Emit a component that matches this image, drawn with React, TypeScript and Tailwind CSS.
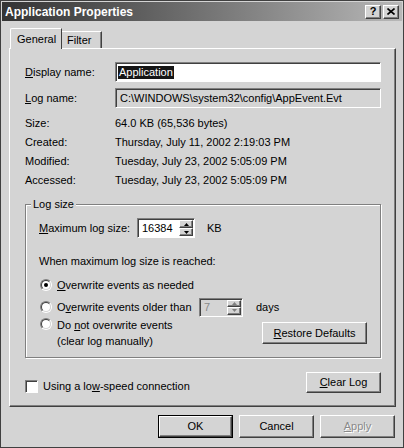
import React from 'react';

const raised =
  'border border-t-white border-l-white border-r-[#404040] border-b-[#404040] shadow-[inset_-1px_-1px_0_#808080]';
const sunken =
  'border border-t-[#808080] border-l-[#808080] border-r-white border-b-white shadow-[inset_1px_1px_0_#404040]';

function Btn({
  children,
  className = '',
  def = false,
}: {
  children: React.ReactNode;
  className?: string;
  def?: boolean;
}) {
  if (def) {
    return (
      <div className={`border border-black ${className}`}>
        <div className={`${raised} h-full w-full bg-[#d4d4d4] flex items-center justify-center`}>
          {children}
        </div>
      </div>
    );
  }
  return (
    <div className={`${raised} bg-[#d4d4d4] flex items-center justify-center ${className}`}>
      {children}
    </div>
  );
}

function Arrow({ up, disabled }: { up?: boolean; disabled?: boolean }) {
  return (
    <div className={`${raised} flex-1 bg-[#d4d4d4] flex items-center justify-center`}>
      <svg width="5" height="3" viewBox="0 0 5 3">
        <path
          d={up ? 'M2.5 0L5 3H0z' : 'M0 0h5L2.5 3z'}
          fill={disabled ? '#808080' : '#000'}
        />
      </svg>
    </div>
  );
}

function Spinner({
  value,
  className,
  disabled = false,
}: {
  value: string;
  className: string;
  disabled?: boolean;
}) {
  return (
    <div
      className={`${sunken} flex ${disabled ? 'bg-[#d4d4d4] text-[#8a8a8a]' : 'bg-white'} ${className}`}
    >
      <div className="flex-1 flex items-center pl-[4px]">{value}</div>
      <div className="w-[15px] flex flex-col py-px pr-px">
        <Arrow up disabled={disabled} />
        <Arrow disabled={disabled} />
      </div>
    </div>
  );
}

function Radio({ checked = false }: { checked?: boolean }) {
  return (
    <div className="w-[12px] h-[12px] rounded-full border border-t-[#808080] border-l-[#808080] border-r-white border-b-white shrink-0">
      <div className="w-full h-full rounded-full border border-t-[#404040] border-l-[#404040] border-r-[#d4d4d4] border-b-[#d4d4d4] bg-white flex items-center justify-center">
        {checked && <div className="w-[4px] h-[4px] rounded-full bg-black" />}
      </div>
    </div>
  );
}

export default function App() {
  return (
    <div className="font-['Liberation_Sans',Arial,sans-serif] text-[11px] leading-none text-black w-[404px] h-[448px] bg-[#d4d4d4] border border-[#404040] flex flex-col overflow-hidden">
      {/* title bar */}
      <div className="mx-px mt-px h-[19px] bg-linear-to-r from-[#343434] to-[#b8b8b8] flex items-center pl-[3px] pr-[3px]">
        <span className="text-white font-bold text-[12px]">Application Properties</span>
        <div className="ml-auto flex gap-[2px]">
          <Btn className="w-[16px] h-[14px]">
            <span className="font-bold text-[11px]">?</span>
          </Btn>
          <Btn className="w-[16px] h-[14px]">
            <svg width="8" height="7" viewBox="0 0 8 7">
              <path d="M0.5 0.5L7.5 6.5M7.5 0.5L0.5 6.5" stroke="#000" strokeWidth="1.6" />
            </svg>
          </Btn>
        </div>
      </div>

      {/* tabs */}
      <div className="flex items-end pl-[9px] mt-[6px] h-[21px]">
        <div className="h-[21px] w-[52px] -mb-px relative z-10 bg-[#d4d4d4] border-t border-l border-t-white border-l-white border-r border-r-[#404040] rounded-tl-[2px] flex items-start pt-[5px] pl-[6px]">
          General
        </div>
        <div className="h-[17px] w-[40px] bg-[#d4d4d4] border-t border-t-white border-r border-r-[#404040] shadow-[inset_-1px_0_0_#808080] flex items-start pt-[3px] pl-[5px]">
          Filter
        </div>
      </div>

      {/* panel */}
      <div className={`${raised} ml-[8px] w-[387px] h-[359px] pl-[15px] pr-[14px] flex flex-col`}>
        <div className="mt-[13px] h-[20px] flex items-center">
          <div className="w-[90px]">
            <u>D</u>isplay name:
          </div>
          <div className={`${sunken} flex-1 h-full bg-white flex items-center pl-[2px]`}>
            <span className="bg-[#161616] text-white px-px py-[1px]">Application</span>
          </div>
        </div>
        <div className="mt-[6px] h-[20px] flex items-center">
          <div className="w-[90px]">
            <u>L</u>og name:
          </div>
          <div className={`${sunken} flex-1 h-full flex items-center pl-[4px]`}>
            C:\WINDOWS\system32\config\AppEvent.Evt
          </div>
        </div>

        <div className="mt-[6px] flex flex-col">
          {[
            ['Size:', '64.0 KB (65,536 bytes)'],
            ['Created:', 'Thursday, July 11, 2002 2:19:03 PM'],
            ['Modified:', 'Tuesday, July 23, 2002 5:05:09 PM'],
            ['Accessed:', 'Tuesday, July 23, 2002 5:05:09 PM'],
          ].map(([k, v]) => (
            <div key={k} className="h-[19px] flex items-center">
              <div className="w-[90px]">{k}</div>
              <div>{v}</div>
            </div>
          ))}
        </div>

        {/* log size group */}
        <div className="mt-[14px] h-[154px] border border-[#808080] shadow-[1px_1px_0_#fff,inset_1px_1px_0_#fff] flex flex-col pl-[13px] pr-[13px]">
          <span className="-mt-[8px] -ml-[8px] self-start px-[2px] h-[14px] leading-[14px] bg-[#d4d4d4]">
            Log size
          </span>
          <div className="mt-[7px] h-[20px] flex items-center">
            <div className="w-[98px]">
              <u>M</u>aximum log size:
            </div>
            <Spinner value="16384" className="w-[58px] h-[20px]" />
            <div className="ml-[12px]">KB</div>
          </div>
          <div className="mt-[15px] h-[16px] flex items-center">When maximum log size is reached:</div>
          <div className="mt-[7px] h-[18px] flex items-center pl-px">
            <Radio checked />
            <div className="ml-[5px]">
              <u>O</u>verwrite events as needed
            </div>
          </div>
          <div className="mt-[3px] h-[20px] flex items-center pl-px">
            <Radio />
            <div className="ml-[5px] w-[142px]">
              O<u>v</u>erwrite events older than
            </div>
            <Spinner value="7" disabled className="w-[44px] h-[19px]" />
            <div className="ml-[13px]">days</div>
          </div>
          <div className="mt-px flex items-start pl-px">
            <Radio />
            <div className="ml-[5px] leading-[16px] -mt-[1px]">
              <div>
                Do <u>n</u>ot overwrite events
              </div>
              <div>(clear log manually)</div>
            </div>
            <Btn className="ml-auto mt-[4px] w-[105px] h-[22px]">
              <span>
                <u>R</u>estore Defaults
              </span>
            </Btn>
          </div>
        </div>

        <div className="mt-[14px] h-[21px] flex items-start">
          <div className={`${sunken} mt-[8px] w-[13px] h-[13px] bg-white shrink-0`} />
          <div className="ml-[5px] mt-[9px]">
            Using a lo<u>w</u>-speed connection
          </div>
          <Btn className="ml-auto w-[75px] h-[21px]">
            <span>
              <u>C</u>lear Log
            </span>
          </Btn>
        </div>
      </div>

      {/* dialog buttons */}
      <div className="mt-[8px] flex justify-end gap-[6px] pr-[8px]">
        <Btn def className="w-[75px] h-[23px]">
          OK
        </Btn>
        <Btn className="w-[75px] h-[23px]">Cancel</Btn>
        <Btn className="w-[75px] h-[23px]">
          <span className="text-[#8a8a8a] [text-shadow:1px_1px_0_#fff]">
            <u>A</u>pply
          </span>
        </Btn>
      </div>
    </div>
  );
}
